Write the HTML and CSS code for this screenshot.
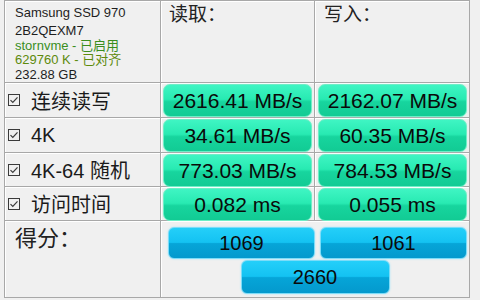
FILE: index.html
```html
<!DOCTYPE html>
<html>
<head>
<meta charset="utf-8">
<link rel="stylesheet" href="styles.css">
</head>
<body>
<div class="app">
  <div class="bench">
    <div class="cell info">
      <div class="model">Samsung SSD 970</div>
      <div class="line">2B2QEXM7</div>
      <div class="line green">stornvme - 已启用</div>
      <div class="line olive">629760 K - 已对齐</div>
      <div class="line">232.88 GB</div>
    </div>
    <div class="cell head">读取：</div>
    <div class="cell head head-w">写入：</div>

    <div class="cell label"><svg class="chk" viewBox="0 0 12 12" width="12" height="12"><rect x="0.5" y="0.5" width="11" height="11" fill="none" stroke="#3a3a3a"/><path d="M2.5 6.2 L4.8 8.5 L9.5 3.3" fill="none" stroke="#3a3a3a" stroke-width="1.2"/></svg><span>连续读写</span></div>
    <div class="cell val"><div class="gbox">2616.41 MB/s</div></div>
    <div class="cell val val-w"><div class="gbox">2162.07 MB/s</div></div>

    <div class="cell label"><svg class="chk" viewBox="0 0 12 12" width="12" height="12"><rect x="0.5" y="0.5" width="11" height="11" fill="none" stroke="#3a3a3a"/><path d="M2.5 6.2 L4.8 8.5 L9.5 3.3" fill="none" stroke="#3a3a3a" stroke-width="1.2"/></svg><span>4K</span></div>
    <div class="cell val"><div class="gbox">34.61 MB/s</div></div>
    <div class="cell val val-w"><div class="gbox">60.35 MB/s</div></div>

    <div class="cell label"><svg class="chk" viewBox="0 0 12 12" width="12" height="12"><rect x="0.5" y="0.5" width="11" height="11" fill="none" stroke="#3a3a3a"/><path d="M2.5 6.2 L4.8 8.5 L9.5 3.3" fill="none" stroke="#3a3a3a" stroke-width="1.2"/></svg><span>4K-64 随机</span></div>
    <div class="cell val"><div class="gbox">773.03 MB/s</div></div>
    <div class="cell val val-w"><div class="gbox">784.53 MB/s</div></div>

    <div class="cell label"><svg class="chk" viewBox="0 0 12 12" width="12" height="12"><rect x="0.5" y="0.5" width="11" height="11" fill="none" stroke="#3a3a3a"/><path d="M2.5 6.2 L4.8 8.5 L9.5 3.3" fill="none" stroke="#3a3a3a" stroke-width="1.2"/></svg><span>访问时间</span></div>
    <div class="cell val"><div class="gbox">0.082 ms</div></div>
    <div class="cell val val-w"><div class="gbox">0.055 ms</div></div>
  </div>
  <div class="score">
    <div class="cell score-label">得分：</div>
    <div class="cell score-area">
      <div class="score-row">
        <div class="bbox">1069</div>
        <div class="bbox">1061</div>
      </div>
      <div class="bbox total">2660</div>
    </div>
  </div>
</div>
</body>
</html>
```

FILE: styles.css
```css
html, body {
  margin: 0;
  padding: 0;
  background: #f0f0f0;
}
body {
  font-family: "Liberation Sans", "Noto Sans CJK SC", sans-serif;
  color: #111;
}
.app {
  margin-left: 4px;
  width: 466px;
}
.bench {
  display: grid;
  grid-template-columns: 155px 153px 154px;
  grid-template-rows: 81px 34px 34px 33px 33px;
  gap: 1px;
  background: #a8a8a8;
  border: 1px solid #a8a8a8;
}
.cell {
  background: #f0f0f0;
  box-shadow: inset 1px 1px 0 #ffffff;
}
.info {
  padding: 3px 0 0 10px;
  font-size: 13px;
  color: #1e1e1e;
}
.model {
  line-height: 18px;
  margin-bottom: 2px;
}
.line {
  line-height: 14.5px;
}
.green { color: #3a8e1e; }
.olive { color: #5d8a0c; }
.head {
  font-size: 19px;
  padding: 1px 0 0 8px;
  line-height: 26px;
  color: #222;
}
.head-w { padding-left: 9px; }
.label {
  display: flex;
  align-items: center;
  padding-left: 3px;
  font-size: 20px;
  color: #1a1a1a;
}
.chk {
  margin-right: 11px;
  flex: none;
}
.val {
  padding: 1px 2px 0 2px;
}
.val-w {
  padding: 1px 2px 0 3px;
}
.gbox {
  height: 31px;
  border: 1px solid #6eeec6;
  border-radius: 7px;
  background: linear-gradient(to bottom, #3ff5c3 0%, #28eab2 46%, #17d59e 54%, #12cb94 100%);
  box-shadow: 0 0 1px #a0f5dc;
  font-size: 21px;
  line-height: 31px;
  text-align: center;
  color: #0a0a0a;
}
.score {
  display: grid;
  grid-template-columns: 155px 308px;
  grid-template-rows: 76px;
  gap: 1px;
  background: #a8a8a8;
  border: 1px solid #a8a8a8;
  border-top: none;
}
.score-label {
  font-size: 22px;
  padding: 3px 0 0 10px;
  line-height: 30px;
  color: #222;
}
.score-area {
  display: flex;
  flex-direction: column;
  align-items: center;
  padding-top: 6px;
  gap: 1px;
}
.score-row {
  display: flex;
  gap: 5px;
  padding-left: 5px;
}
.bbox {
  width: 145px;
  height: 30px;
  border: 1px solid #7cdcf8;
  border-radius: 6px;
  background: linear-gradient(to bottom, #24cff9 0%, #14c2f2 48%, #06a5d8 52%, #0499cd 100%);
  box-shadow: 0 0 2px #9fe4fa;
  font-size: 20px;
  line-height: 30px;
  text-align: center;
  color: #0a0a0a;
}
.total {
  width: 147px;
  height: 32px;
  line-height: 32px;
}
```
